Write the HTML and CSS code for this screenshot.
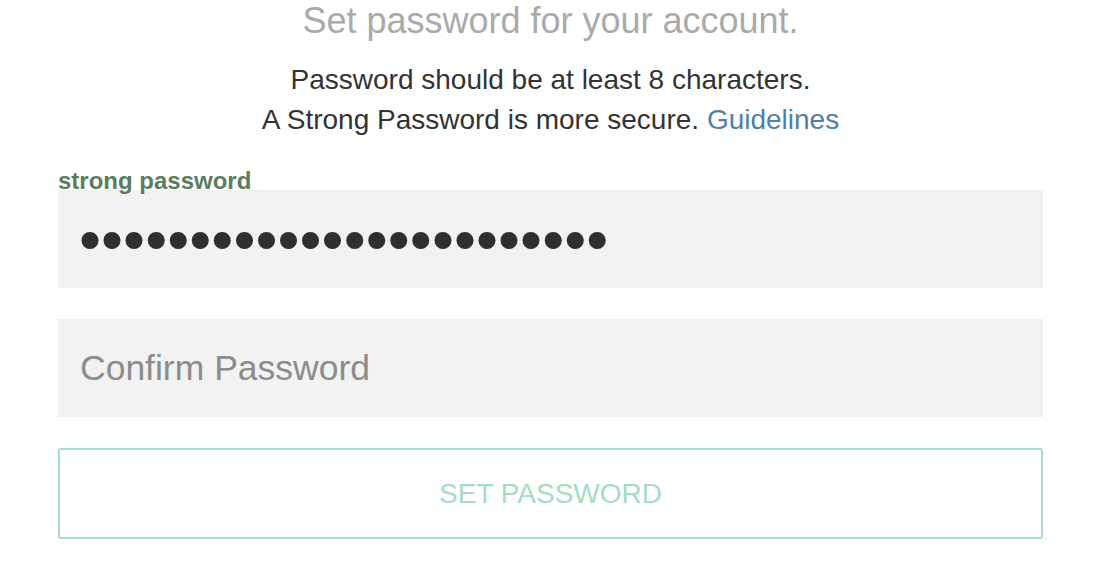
FILE: index.html
```html
<!DOCTYPE html>
<html lang="en">
<head>
    <meta charset="UTF-8">
    <meta name="viewport" content="width=device-width, initial-scale=1.0">
    <title>Set Password</title>
    <link rel="stylesheet" href="styles.css">
</head>
<body>
    <div class="card">
        <h2 class="title">Set password for your account.</h2>
        <p class="hint">
            Password should be at least 8 characters.<br>
            A Strong Password is more secure. <a href="#" class="link">Guidelines</a>
        </p>

        <form class="form" onsubmit="return false;">
            <label for="password" class="strength">strong password</label>
            <input type="password" id="password" class="field field-pass" value="abcdefghijklmnopqrstuvwx">
            <input type="password" id="confirm" class="field" placeholder="Confirm Password">
            <button type="submit" class="btn">SET PASSWORD</button>
        </form>
    </div>
</body>
</html>
```

FILE: styles.css
```css
body {
    margin: 0;
    background: #ffffff;
    font-family: "Liberation Sans", Arial, sans-serif;
    color: #333333;
}

.card {
    padding: 1px 57px 20px 58px;
    text-align: center;
}

.title {
    margin: 0;
    font-size: 36px;
    font-weight: normal;
    line-height: 40px;
    color: #aaaaaa;
}

.hint {
    margin: 19px 0 0 0;
    font-size: 28px;
    line-height: 40px;
    color: #333333;
}

.link {
    color: #4f7fab;
    text-decoration: none;
}

.form {
    display: flex;
    flex-direction: column;
    margin-top: 29px;
    text-align: left;
}

/* sits a little over the top edge of the field, descenders stay visible */
.strength {
    position: relative;
    z-index: 1;
    margin-bottom: -3px;
    font-size: 24px;
    font-weight: bold;
    line-height: 24px;
    color: #5b7d5e;
}

.field {
    box-sizing: border-box;
    height: 98px;
    margin: 0 0 31px 0;
    padding: 0 22px;
    border: none;
    outline: none;
    background: #f2f2f2;
    font-family: "Liberation Sans", Arial, sans-serif;
    font-size: 35.5px;
    color: #333333;
}

.field::placeholder {
    color: #8c8c8c;
}

.field-pass {
    font-size: 63px;
    padding-left: 21px;
    color: #2f2f2f;
}

.btn {
    box-sizing: border-box;
    height: 91px;
    border: 2px solid #a9ddc6;
    border-radius: 3px;
    background: #ffffff;
    font-family: "Liberation Sans", Arial, sans-serif;
    font-size: 28px;
    color: #a6dcc0;
    cursor: pointer;
}
```
